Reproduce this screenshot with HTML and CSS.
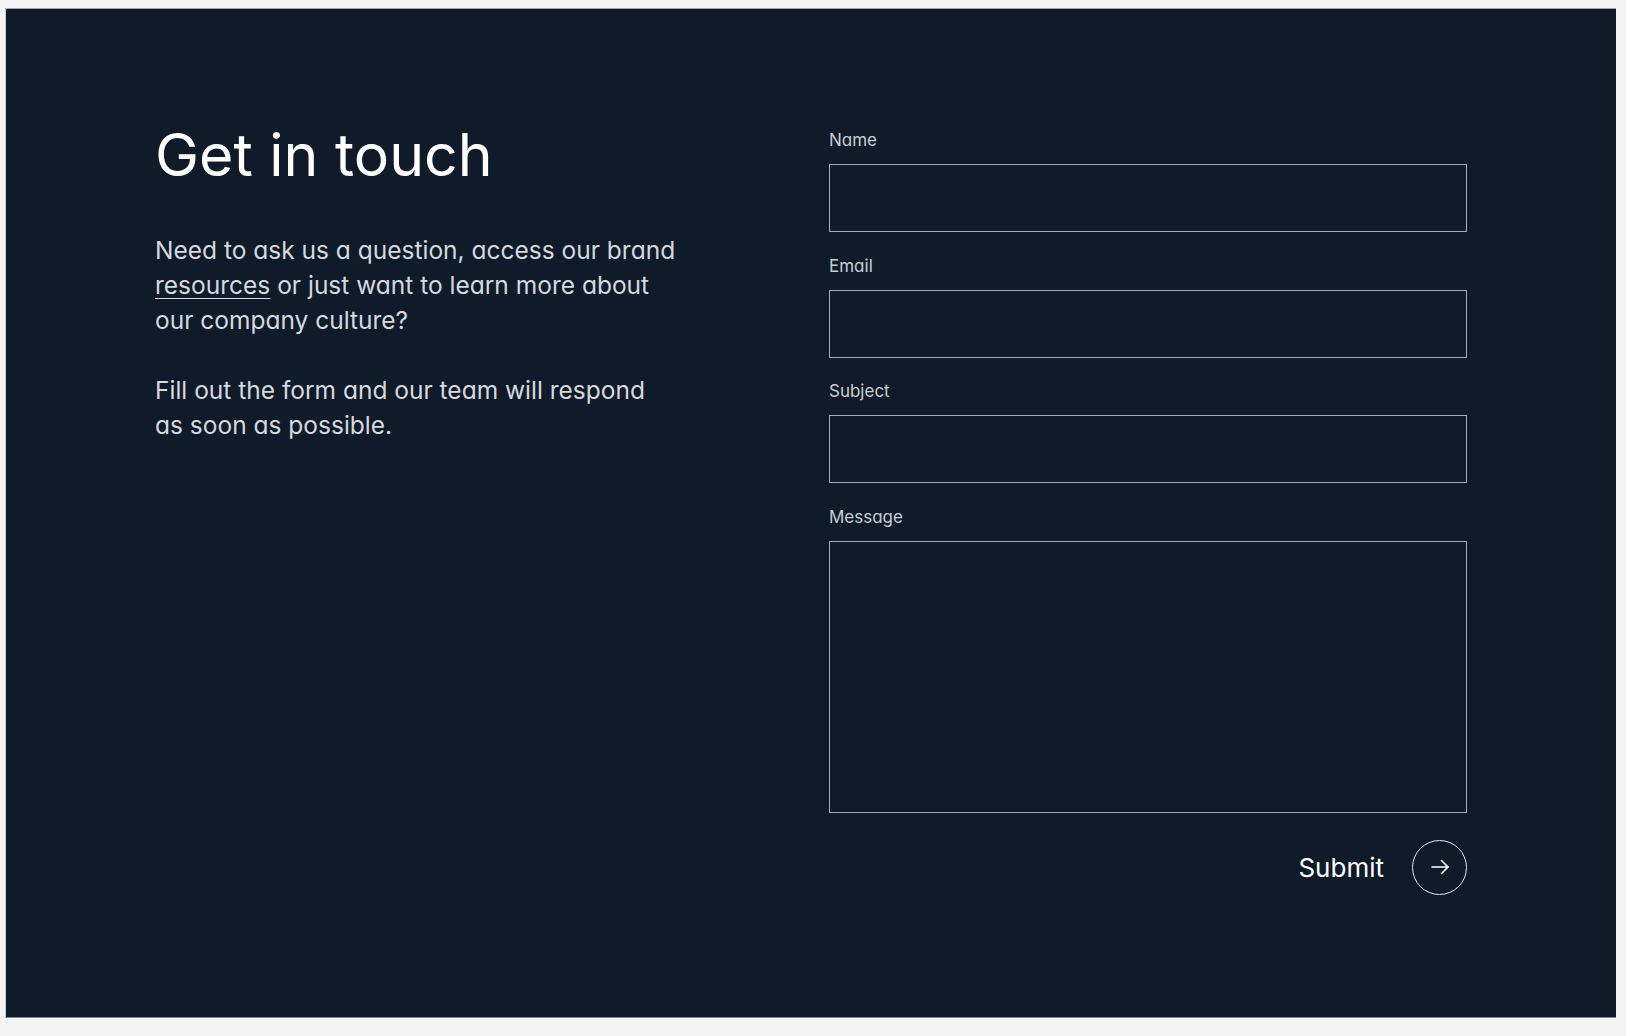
FILE: index.html
```html
<!DOCTYPE html>
<html lang="en">
<head>
<meta charset="utf-8">
<title>Get in touch</title>
<link rel="stylesheet" href="styles.css">
</head>
<body>
<section class="panel">
  <div class="intro">
    <h1 class="title">Get in touch</h1>
    <p class="lead">Need to ask us a question, access our brand<br><a href="#" class="link">resources</a> or just want to learn more about<br>our company culture?</p>
    <p class="lead">Fill out the form and our team will respond<br>as soon as possible.</p>
  </div>
  <form class="form">
    <div class="field">
      <label class="label" for="name">Name</label>
      <input class="input" id="name" type="text">
    </div>
    <div class="field">
      <label class="label" for="email">Email</label>
      <input class="input" id="email" type="email">
    </div>
    <div class="field">
      <label class="label" for="subject">Subject</label>
      <input class="input" id="subject" type="text">
    </div>
    <div class="field field-message">
      <label class="label" for="message">Message</label>
      <textarea class="input textarea" id="message"></textarea>
    </div>
    <div class="actions">
      <button type="submit" class="submit">
        <span class="submit-text">Submit</span>
        <span class="submit-icon">
          <svg width="20" height="20" viewBox="0 0 20 20" fill="none" stroke="#ffffff" stroke-width="1.6" stroke-linecap="round" stroke-linejoin="round">
            <path d="M2 10h16"/>
            <path d="M11.5 3.5L18 10l-6.5 6.5"/>
          </svg>
        </span>
      </button>
    </div>
  </form>
</section>
</body>
</html>
```
FILE: styles.css
```css
html, body {
  margin: 0;
  padding: 0;
}
body {
  background: #f4f4f4;
  padding: 8px 10px 17px 5px;
  font-family: "Inter", "Lato", "Liberation Sans", sans-serif;
  font-feature-settings: "cv11" 1;
}
.panel {
  background: #0f1b29;
  border-top: 1px solid #a3a6a9;
  border-left: 1px solid #c8c9ca;
  border-bottom: 1px solid #7b8794;
  height: 1010px;
  box-sizing: border-box;
  padding: 110px 149px 0 149px;
  display: flex;
  justify-content: space-between;
  align-items: flex-start;
}
.intro {
  width: 560px;
}
.title {
  margin: 0;
  font-weight: 400;
  font-size: 59px;
  line-height: 72px;
  letter-spacing: 0;
  color: #ffffff;
}
.lead {
  margin: 42px 0 0 0;
  font-size: 24.5px;
  line-height: 35px;
  color: #d6d9de;
  letter-spacing: 0;
  white-space: nowrap;
}
.lead + .lead {
  margin-top: 35px;
}
.link {
  color: #d6d9de;
  text-decoration: underline;
  text-underline-offset: 4px;
  text-decoration-thickness: 1px;
}
.form {
  width: 638px;
  padding-top: 10px;
  display: flex;
  flex-direction: column;
}
.field {
  display: flex;
  flex-direction: column;
  margin-bottom: 22.5px;
}
.field-message {
  margin-bottom: 27px;
}
.label {
  font-size: 17px;
  line-height: 22px;
  color: #c9cdd2;
  margin-bottom: 13px;
}
.input {
  box-sizing: border-box;
  height: 68px;
  width: 100%;
  background: transparent;
  border: 1px solid #a7acb2;
  border-radius: 0;
  margin: 0;
  color: #ffffff;
  font: inherit;
  padding: 0 16px;
  outline: none;
}
.textarea {
  height: 272px;
  resize: none;
  display: block;
}
.actions {
  display: flex;
  justify-content: flex-end;
}
.submit {
  display: flex;
  align-items: center;
  gap: 28px;
  background: none;
  border: 0;
  padding: 0;
  cursor: pointer;
  font-family: inherit;
}
.submit-text {
  font-size: 26px;
  color: #ffffff;
  letter-spacing: 0;
}
.submit-icon {
  width: 55px;
  height: 55px;
  box-sizing: border-box;
  border: 1px solid #e6e8ea;
  border-radius: 50%;
  display: flex;
  align-items: center;
  justify-content: center;
}
```
